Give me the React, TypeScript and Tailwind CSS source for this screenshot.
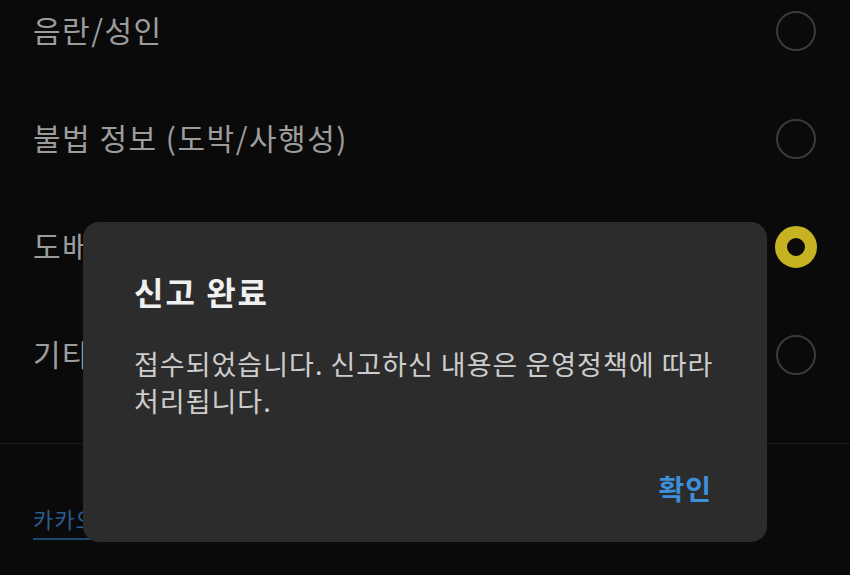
import React from "react";

const items = [
  { label: "음란/성인", selected: false },
  { label: "불법 정보 (도박/사행성)", selected: false },
  { label: "도배", selected: true },
  { label: "기타", selected: false },
];

function Radio({ selected }: { selected: boolean }) {
  if (selected) {
    return (
      <div className="w-[42px] h-[42px] rounded-full border-[12px] border-[#c7b322] bg-[#0a0a0a] shrink-0" />
    );
  }
  return <div className="w-[40px] h-[40px] mr-px rounded-full border-2 border-[#3a3a3a] shrink-0" />;
}

export default function App() {
  return (
    <div
      className="relative w-[850px] h-[575px] overflow-hidden bg-[#0a0a0a]"
      style={{ fontFamily: '"Noto Sans CJK KR", "Noto Sans", sans-serif' }}
    >
      <div className="flex flex-col -mt-[23px]">
        {items.map((it) => (
          <div key={it.label} className="h-[108px] flex items-center justify-between pl-[33px] pr-[33px]">
            <span className="mb-[4px] text-[30px] leading-none tracking-[1.5px] text-[#9c9c9c]">{it.label}</span>
            <Radio selected={it.selected} />
          </div>
        ))}
      </div>
      <div className="mt-[34px] h-px bg-[#1c1c1c]" />
      <div className="pl-[33px] pt-[63px]">
        <span className="text-[22px] leading-none tracking-[1px] text-[#2b5b8e] border-b-2 border-[#1f4670] pb-[4px]">
          카카오 운영정책 보기
        </span>
      </div>

      <div className="absolute left-[83px] top-[222px] w-[684px] h-[320px] rounded-[16px] bg-[#2c2c2c] flex flex-col pl-[51px] pr-[55px] pt-[53px]">
        <div className="text-[32px] leading-none tracking-[2px] font-bold text-[#f0f0f0]">신고 완료</div>
        <div className="mt-[38px] text-[27px] leading-[37px] tracking-[1px] text-[#cdcdcd] whitespace-nowrap">
          접수되었습니다. 신고하신 내용은 운영정책에 따라
          <br />
          처리됩니다.
        </div>
        <div className="mt-auto mb-[40px] flex justify-end">
          <span className="text-[28px] leading-none tracking-[1px] font-bold text-[#3d8fd9]">확인</span>
        </div>
      </div>
    </div>
  );
}
